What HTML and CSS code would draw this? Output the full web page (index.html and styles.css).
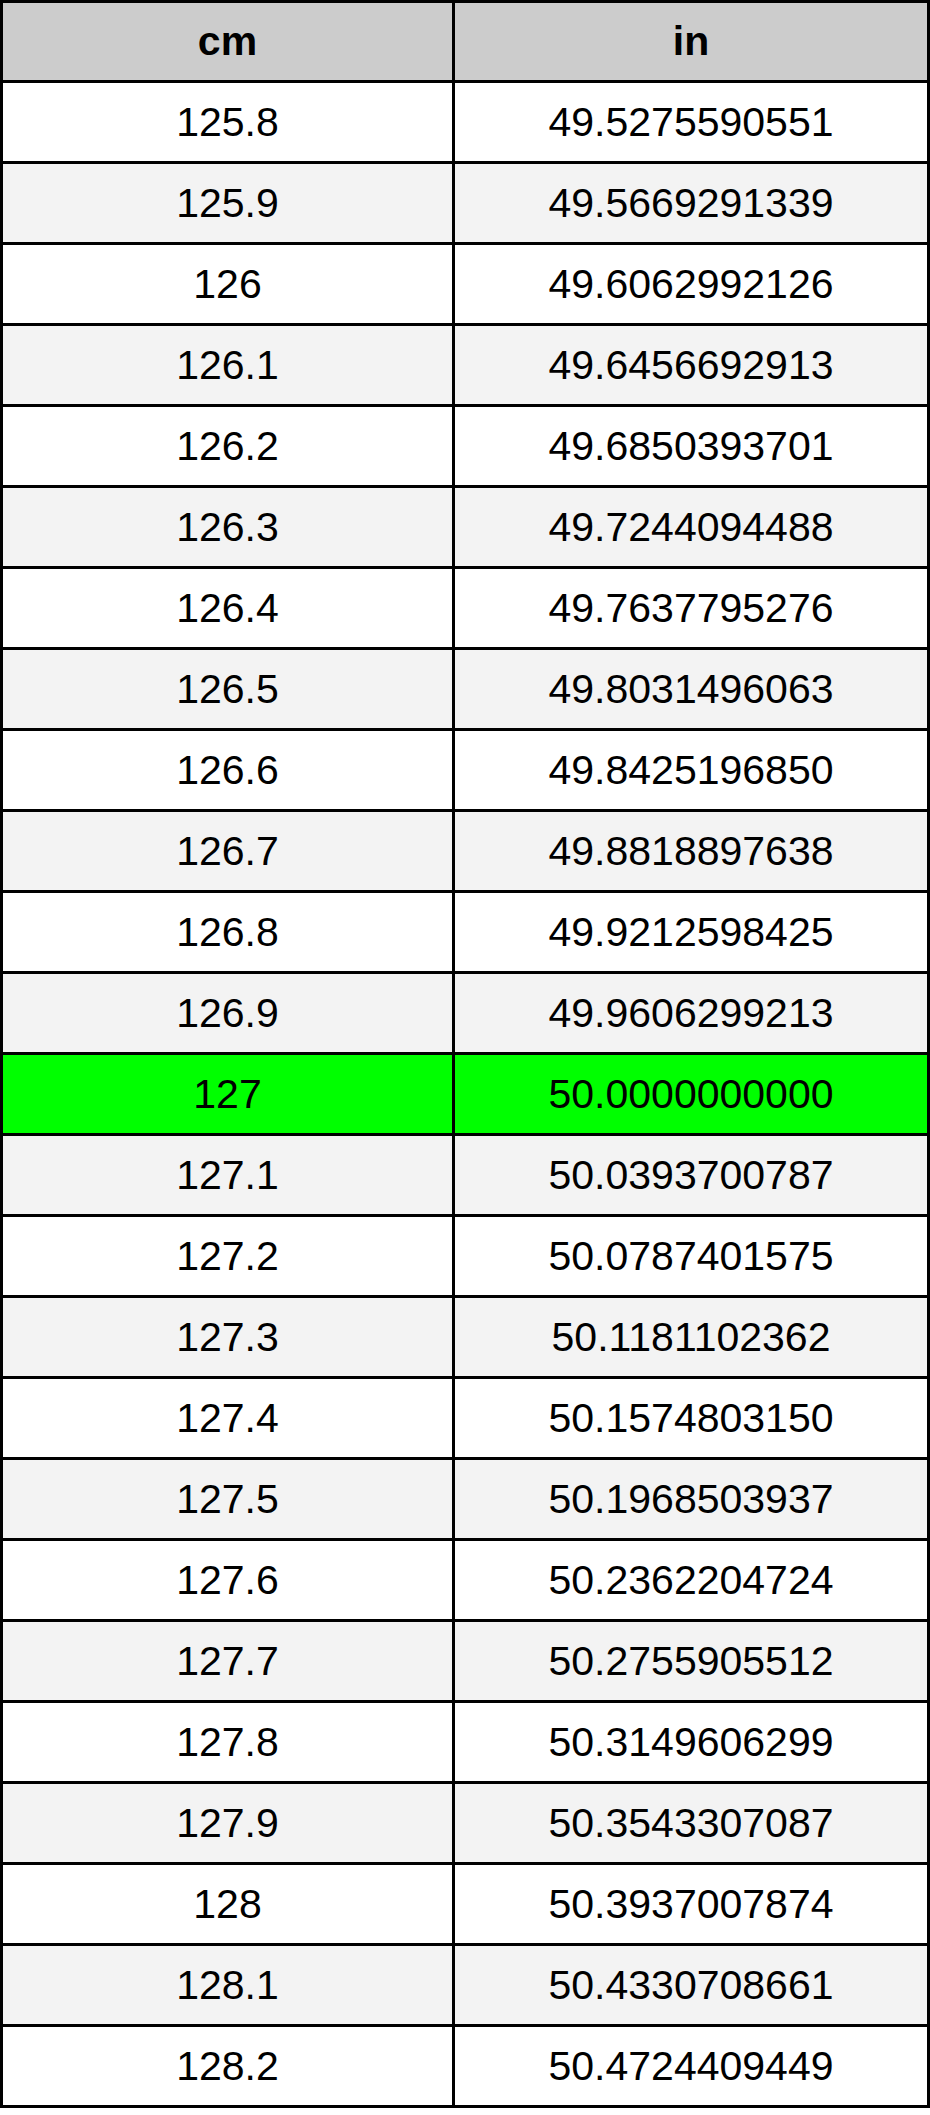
FILE: index.html
```html
<!DOCTYPE html>
<html>
<head>
<meta charset="utf-8">
<link rel="stylesheet" href="styles.css">
</head>
<body>
<div class="table">
  <div class="row head"><div class="cell">cm</div><div class="cell">in</div></div>
  <div class="row"><div class="cell">125.8</div><div class="cell">49.5275590551</div></div>
  <div class="row alt"><div class="cell">125.9</div><div class="cell">49.5669291339</div></div>
  <div class="row"><div class="cell">126</div><div class="cell">49.6062992126</div></div>
  <div class="row alt"><div class="cell">126.1</div><div class="cell">49.6456692913</div></div>
  <div class="row"><div class="cell">126.2</div><div class="cell">49.6850393701</div></div>
  <div class="row alt"><div class="cell">126.3</div><div class="cell">49.7244094488</div></div>
  <div class="row"><div class="cell">126.4</div><div class="cell">49.7637795276</div></div>
  <div class="row alt"><div class="cell">126.5</div><div class="cell">49.8031496063</div></div>
  <div class="row"><div class="cell">126.6</div><div class="cell">49.8425196850</div></div>
  <div class="row alt"><div class="cell">126.7</div><div class="cell">49.8818897638</div></div>
  <div class="row"><div class="cell">126.8</div><div class="cell">49.9212598425</div></div>
  <div class="row alt"><div class="cell">126.9</div><div class="cell">49.9606299213</div></div>
  <div class="row hl"><div class="cell">127</div><div class="cell">50.0000000000</div></div>
  <div class="row alt"><div class="cell">127.1</div><div class="cell">50.0393700787</div></div>
  <div class="row"><div class="cell">127.2</div><div class="cell">50.0787401575</div></div>
  <div class="row alt"><div class="cell">127.3</div><div class="cell">50.1181102362</div></div>
  <div class="row"><div class="cell">127.4</div><div class="cell">50.1574803150</div></div>
  <div class="row alt"><div class="cell">127.5</div><div class="cell">50.1968503937</div></div>
  <div class="row"><div class="cell">127.6</div><div class="cell">50.2362204724</div></div>
  <div class="row alt"><div class="cell">127.7</div><div class="cell">50.2755905512</div></div>
  <div class="row"><div class="cell">127.8</div><div class="cell">50.3149606299</div></div>
  <div class="row alt"><div class="cell">127.9</div><div class="cell">50.3543307087</div></div>
  <div class="row"><div class="cell">128</div><div class="cell">50.3937007874</div></div>
  <div class="row alt"><div class="cell">128.1</div><div class="cell">50.4330708661</div></div>
  <div class="row"><div class="cell">128.2</div><div class="cell">50.4724409449</div></div>
</div>
</body>
</html>
```
FILE: styles.css
```css
html, body {
  margin: 0;
  padding: 0;
  background: #ffffff;
}
.table {
  width: 930px;
  box-sizing: border-box;
  border: 3px solid #000;
  font-family: "Liberation Sans", Arial, sans-serif;
  font-size: 41px;
  color: #000;
}
.row {
  display: grid;
  grid-template-columns: 449px 475px;
  height: 78px;
  border-bottom: 3px solid #000;
  background: #ffffff;
}
.row:last-child {
  border-bottom: none;
}
.row.head {
  height: 77px;
  background: #cccccc;
  font-weight: bold;
}
.row.alt {
  background: #f3f3f3;
}
.row.hl {
  background: #00ff00;
}
.cell {
  display: flex;
  align-items: center;
  justify-content: center;
  line-height: 1;
}
.cell + .cell {
  border-left: 3px solid #000;
}
```
